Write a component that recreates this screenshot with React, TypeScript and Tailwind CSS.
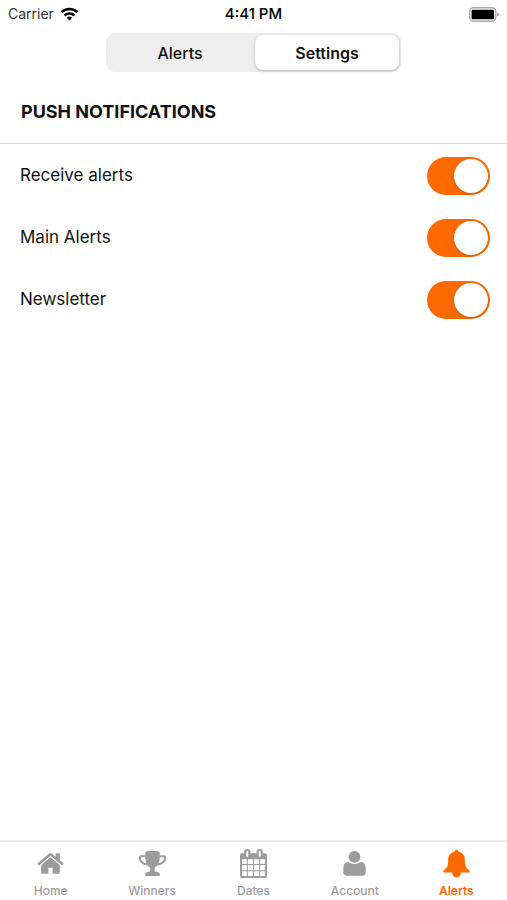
import React, { useState } from "react";

const tabs = ["Alerts", "Settings"];

const options = [
  { id: "receive", label: "Receive alerts" },
  { id: "main", label: "Main Alerts" },
  { id: "newsletter", label: "Newsletter" },
];

const navItems = [
  {
    label: "Home",
    path: "M1472 992v480q0 26-19 45t-45 19h-384v-384h-256v384h-384q-26 0-45-19t-19-45v-480q0-1 .5-3t.5-3l575-474 575 474q1 2 1 6zm223-69l-62 74q-8 9-21 11h-3q-13 0-21-7l-692-577-692 577q-12 8-24 7-13-2-21-11l-62-74q-8-10-7-23.5t11-21.5l719-599q32-26 76-26t76 26l244 204v-195q0-14 9-23t23-9h192q14 0 23 9t9 23v408l219 182q10 8 11 21.5t-7 23.5z",
  },
  {
    label: "Winners",
    path: "M522 883q-74-162-74-371h-256v96q0 78 94.5 162t235.5 113zm1078-275v-96h-256q0 209-74 371 141-29 235.5-113t94.5-162zm128-128v128q0 71-41.5 143t-112 130-173 97.5-215.5 44.5q-42 54-95 95-38 34-52.5 72.5t-14.5 89.5q0 54 30.5 91t97.5 37q75 0 133.5 45.5t58.5 114.5v64q0 14-9 23t-23 9h-832q-14 0-23-9t-9-23v-64q0-69 58.5-114.5t133.5-45.5q67 0 97.5-37t30.5-91q0-51-14.5-89.5t-52.5-72.5q-53-41-95-95-113-5-215.5-44.5t-173-97.5-112-130-41.5-143v-128q0-40 28-68t68-28h288v-96q0-66 47-113t113-47h576q66 0 113 47t47 113v96h288q40 0 68 28t28 68z",
  },
  {
    label: "Dates",
    path: "M192 1664h288v-288h-288v288zm352 0h320v-288h-320v288zm-352-352h288v-320h-288v320zm352 0h320v-320h-320v320zm-352-384h288v-288h-288v288zm736 736h320v-288h-320v288zm-384-736h320v-288h-320v288zm768 736h288v-288h-288v288zm-384-352h320v-320h-320v320zm-352-864v-288q0-13-9.5-22.5t-22.5-9.5h-64q-13 0-22.5 9.5t-9.5 22.5v288q0 13 9.5 22.5t22.5 9.5h64q13 0 22.5-9.5t9.5-22.5zm736 864h288v-320h-288v320zm-384-384h320v-288h-320v288zm384 0h288v-288h-288v288zm32-480v-288q0-13-9.5-22.5t-22.5-9.5h-64q-13 0-22.5 9.5t-9.5 22.5v288q0 13 9.5 22.5t22.5 9.5h64q13 0 22.5-9.5t9.5-22.5zm384-64v1280q0 52-38 90t-90 38h-1408q-52 0-90-38t-38-90v-1280q0-52 38-90t90-38h128v-96q0-66 47-113t113-47h64q66 0 113 47t47 113v96h384v-96q0-66 47-113t113-47h64q66 0 113 47t47 113v96h128q52 0 90 38t38 90z",
  },
  {
    label: "Account",
    path: "M896 120a365 365 0 0 1 0 730 365 365 0 0 1 0-730zM500 800Q680 930 896 930T1292 800Q1590 800 1590 1250V1420Q1590 1650 1350 1650H442Q202 1650 202 1420V1250Q202 800 500 800z",
  },
  {
    label: "Alerts",
    path: "M896 30Q985 30 1000 160Q1390 250 1410 650Q1410 1060 1520 1180L1700 1350Q1760 1440 1660 1450H1165Q1150 1760 896 1760Q642 1760 627 1450H132Q32 1440 92 1350L272 1180Q382 1060 382 650Q402 250 792 160Q807 30 896 30z",
  },
];

const StatusBar = () => {
  return (
    <div className="grid grid-cols-3 items-center h-7 px-2 text-sm">
      <div className="flex items-center gap-[6px] text-[#333]">
        <span>Carrier</span>
        <svg width="19" height="14" viewBox="0 0 18 14" fill="none" stroke="#000" strokeWidth="2.5">
          <path d="M1 5.2a11.4 11.4 0 0 1 16 0" />
          <path d="M4 8.5a7.1 7.1 0 0 1 10 0" />
          <path d="M6.3 10.8a3.8 3.8 0 0 1 5.4 0L9 13.6z" fill="#000" stroke="none" />
        </svg>
      </div>
      <p className="text-center text-[15px] font-medium text-black">4:41 PM</p>
      <svg className="justify-self-end" width="30" height="15" viewBox="0 0 30 15">
        <rect x=".8" y=".8" width="26" height="13.4" rx="4" fill="#fff" stroke="#aaa" strokeWidth="1.4" />
        <rect x="2.6" y="2.8" width="22.4" height="9.4" rx="1" fill="#000" />
        <path d="M28 5.5q2 .6 2 2t-2 2z" fill="#aaa" />
      </svg>
    </div>
  );
};

const App = () => {
  const [tab, setTab] = useState("Settings");
  const [enabled, setEnabled] = useState<Record<string, boolean>>({
    receive: true,
    main: true,
    newsletter: true,
  });

  return (
    <div className="min-h-screen flex flex-col bg-white text-[#111] font-['Inter',sans-serif]">
      <header className="border-b border-[#d8d8d8]">
        <StatusBar />
        <div className="grid grid-cols-2 gap-1 w-[58%] h-[39px] mx-auto mt-[5px] p-0.5 rounded-[9px] bg-[#eee]">
          {tabs.map((name) => (
            <button
              key={name}
              type="button"
              onClick={() => setTab(name)}
              className={
                tab === name
                  ? "rounded-lg bg-white text-base leading-5 font-semibold shadow-[0_1px_3px_rgba(0,0,0,0.25)]"
                  : "rounded-lg text-base leading-5 font-medium"
              }
            >
              {name}
            </button>
          ))}
        </div>
        <h1 className="px-[21px] pt-[27px] pb-[18px] text-lg leading-[26px] font-bold">PUSH NOTIFICATIONS</h1>
      </header>

      <main className="flex-1 flex flex-col pt-px">
        {options.map((option) => (
          <label
            key={option.id}
            htmlFor={option.id}
            className="flex items-center justify-between h-[62px] pl-5 pr-[17px] text-[17px]"
          >
            {option.label}
            <input
              id={option.id}
              type="checkbox"
              checked={enabled[option.id]}
              onChange={(e) => setEnabled({ ...enabled, [option.id]: e.target.checked })}
              className="appearance-none flex items-center w-[63px] h-[38px] px-0.5 rounded-full bg-gray-200 checked:bg-[#ff6a00] before:content-[''] before:size-[34px] before:rounded-full before:bg-white before:shadow-[0_1px_3px_rgba(0,0,0,0.2)] checked:before:translate-x-[25px]"
            />
          </label>
        ))}
      </main>

      <nav className="grid grid-cols-5 h-[60px] border-t-2 border-[#ececec]">
        {navItems.map((item, i) => (
          <a
            key={i}
            href="#"
            className={
              i === 4
                ? "flex flex-col items-center pt-[7px] gap-[5px] text-xs font-semibold text-[#ff6a00]"
                : "flex flex-col items-center pt-[7px] gap-[5px] text-xs font-medium text-[#9c9c9c]"
            }
          >
            <svg width="29" height="29" viewBox="0 0 1792 1792" fill="currentColor">
              <path d={item.path} />
            </svg>
            <span>{item.label}</span>
          </a>
        ))}
      </nav>
    </div>
  );
};

export default App;
